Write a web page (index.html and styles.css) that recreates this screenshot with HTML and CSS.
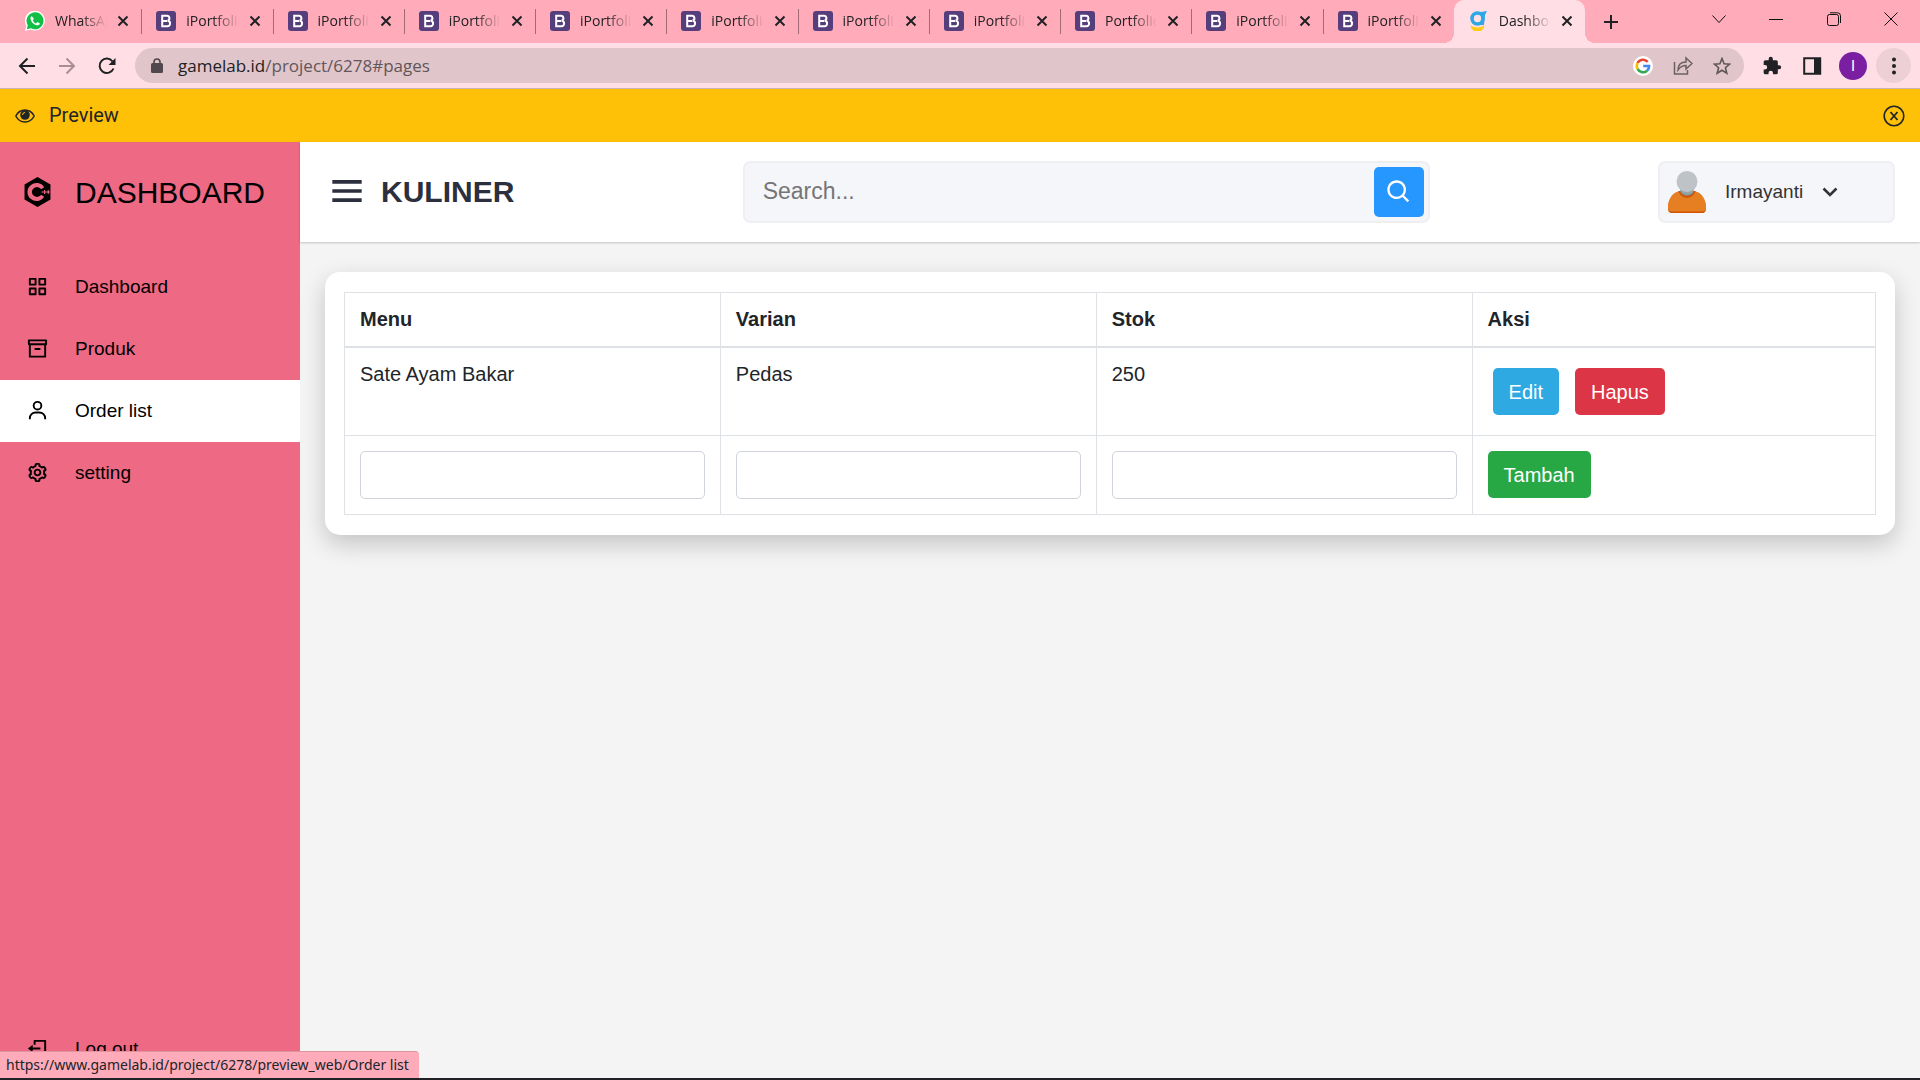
FILE: index.html
```html
<!DOCTYPE html>
<html lang="id">
<head>
<meta charset="utf-8">
<title>Dashboard</title>
<link rel="stylesheet" href="styles.css">
</head>
<body>
<svg class="sprite" aria-hidden="true">
  <symbol id="bs" viewBox="0 0 20 20"><rect width="20" height="20" rx="3" fill="#563d7c"/><path d="M6.200 4.800h4.600a2.500 2.500 0 0 1 .8 4.900a2.750 2.750 0 0 1-.6 5.500H6.200z M7 9.900h4" fill="none" stroke="#fff" stroke-width="2"/></symbol>
  <symbol id="x" viewBox="0 0 12 12"><path d="M1.500 1.500l9 9M10.500 1.500l-9 9" stroke="#202124" stroke-width="2" fill="none"/></symbol>
</svg>

<div class="browser">
  <div class="strip">
    <div class="tabs">
      <div class="tab"><svg class="fav" viewBox="0 0 20 20"><path d="M0 20l1.300-5.200A10 10 0 1 1 5.500 18.600z" fill="#fff"/><path d="M1.700 18.300l1.100-4A8.500 8.500 0 1 1 6 17.300z" fill="#12bf45"/><path d="M7 5.200c-.9 0-1.600 1-1.500 2.200.3 3.500 4 6.900 7.300 6.900 1.200 0 2-.9 2-2l-2.500-1.300-1.200 1.400c-1.600-.6-2.700-1.800-3.300-3.200L8.900 8z" fill="#fff"/></svg><span class="tab-title">WhatsApp</span><button class="close" aria-label="Close"><svg><use href="#x"/></svg></button></div>
      <div class="tab"><svg class="fav"><use href="#bs"/></svg><span class="tab-title">iPortfolio</span><button class="close" aria-label="Close"><svg><use href="#x"/></svg></button></div>
      <div class="tab"><svg class="fav"><use href="#bs"/></svg><span class="tab-title">iPortfolio</span><button class="close" aria-label="Close"><svg><use href="#x"/></svg></button></div>
      <div class="tab"><svg class="fav"><use href="#bs"/></svg><span class="tab-title">iPortfolio</span><button class="close" aria-label="Close"><svg><use href="#x"/></svg></button></div>
      <div class="tab"><svg class="fav"><use href="#bs"/></svg><span class="tab-title">iPortfolio</span><button class="close" aria-label="Close"><svg><use href="#x"/></svg></button></div>
      <div class="tab"><svg class="fav"><use href="#bs"/></svg><span class="tab-title">iPortfolio</span><button class="close" aria-label="Close"><svg><use href="#x"/></svg></button></div>
      <div class="tab"><svg class="fav"><use href="#bs"/></svg><span class="tab-title">iPortfolio</span><button class="close" aria-label="Close"><svg><use href="#x"/></svg></button></div>
      <div class="tab"><svg class="fav"><use href="#bs"/></svg><span class="tab-title">iPortfolio</span><button class="close" aria-label="Close"><svg><use href="#x"/></svg></button></div>
      <div class="tab"><svg class="fav"><use href="#bs"/></svg><span class="tab-title">Portfolio</span><button class="close" aria-label="Close"><svg><use href="#x"/></svg></button></div>
      <div class="tab"><svg class="fav"><use href="#bs"/></svg><span class="tab-title">iPortfolio</span><button class="close" aria-label="Close"><svg><use href="#x"/></svg></button></div>
      <div class="tab"><svg class="fav"><use href="#bs"/></svg><span class="tab-title">iPortfolio</span><button class="close" aria-label="Close"><svg><use href="#x"/></svg></button></div>
      <div class="tab active"><svg class="fav" viewBox="0 0 20 20"><circle cx="8.500" cy="7.500" r="5.500" fill="none" stroke="#2ea8e5" stroke-width="3.600"/><path d="M12 1l6-1-2 4-1 10h-3z" fill="#2ea8e5"/><path d="M1.500 14.500q7 4 14 0l-1 3-2.500 2.500H5l-2.500-2.500z" fill="#fccb16"/></svg><span class="tab-title">Dashboard</span><button class="close" aria-label="Close"><svg><use href="#x"/></svg></button></div>
    </div>
    <div class="strip-end">
      <button class="newtab" aria-label="New tab"><svg width="16" height="16" viewBox="0 0 16 16"><path d="M8 1v14M1 8h14" stroke="#202124" stroke-width="2"/></svg></button>
      <button class="caption" aria-label="Search tabs"><svg width="14" height="14" viewBox="0 0 14 14"><path d="M.5 3.500l6.500 7 6.500-7"/></svg></button>
      <button class="caption" aria-label="Minimize"><svg width="14" height="14" viewBox="0 0 14 14"><path d="M0 7.500h14"/></svg></button>
      <button class="caption" aria-label="Restore"><svg width="14" height="14" viewBox="0 0 14 14"><rect x=".5" y="2.500" width="11" height="11" rx="2"/><path d="M3 .8h7.500a3 3 0 0 1 3 3V11"/></svg></button>
      <button class="caption" aria-label="Close window"><svg width="14" height="14" viewBox="0 0 14 14"><path d="M.5.5l13 13M13.500.5l-13 13"/></svg></button>
    </div>
  </div>

  <div class="toolbar">
    <button class="tool" aria-label="Back"><svg width="18" height="18" viewBox="0 0 18 18"><path d="M17 9H2M9.500 1.500L2 9l7.500 7.500" fill="none" stroke="#202124" stroke-width="2"/></svg></button>
    <button class="tool" aria-label="Forward"><svg width="18" height="18" viewBox="0 0 18 18"><path d="M1 9h15M8.500 1.500L16 9l-7.500 7.500" fill="none" stroke="#a98f95" stroke-width="2"/></svg></button>
    <button class="tool" aria-label="Reload"><svg width="18" height="18" viewBox="0 0 18 18"><path d="M15.500 11.500A7.200 7.200 0 1 1 14.600 4.500" fill="none" stroke="#202124" stroke-width="2"/><path d="M17.500 1v7h-7z" fill="#202124"/></svg></button>
    <div class="omnibox">
      <svg width="12" height="16" viewBox="0 0 12 16"><rect y="5" width="12" height="10" rx="1.500" fill="#50484c"/><path d="M3 6V4a3 3 0 0 1 6 0v2" fill="none" stroke="#50484c" stroke-width="1.600"/></svg>
      <span class="url">gamelab.id<span class="path">/project/6278#pages</span></span>
      <div class="omni-icons">
        <svg width="20" height="20" viewBox="0 0 20 20"><circle cx="10" cy="10" r="10" fill="#fff"/><g fill="none" stroke-width="2.600"><path d="M14.700 5.800A6.200 6.200 0 0 0 4.600 7" stroke="#ea4335"/><path d="M4.600 7a6.200 6.200 0 0 0 0 6" stroke="#fbbc05"/><path d="M4.600 13a6.200 6.200 0 0 0 9.500 1.700" stroke="#34a853"/><path d="M14.100 14.700A6 6 0 0 0 16.100 10H10.200" stroke="#4285f4"/></g></svg>
        <svg width="20" height="20" viewBox="0 0 20 20"><path d="M1.500 6v12h13v-4M5 14c0-5 3-8 8-8V2l6 5.500-6 5.500V9.500c-4 0-6 1.500-8 4.500z" fill="none" stroke="#6b6064" stroke-width="1.500"/></svg>
        <svg width="18" height="18" viewBox="0 0 18 18"><path d="M9 1.500l2.100 5.200 5.600.4-4.300 3.600 1.400 5.500L9 13.200l-4.800 3 1.400-5.500-4.300-3.600 5.600-.4z" fill="none" stroke="#5f5659" stroke-width="1.600"/></svg>
      </div>
    </div>
    <div class="actions">
      <svg width="20" height="20" viewBox="0 0 24 24"><path d="M20.500 11H19V7a2 2 0 0 0-2-2h-4V3.500a2.500 2.500 0 0 0-5 0V5H4a2 2 0 0 0-2 2v3.800h1.500a2.700 2.700 0 0 1 0 5.400H2V20a2 2 0 0 0 2 2h3.800v-1.500a2.700 2.700 0 0 1 5.400 0V22H17a2 2 0 0 0 2-2v-4h1.500a2.500 2.500 0 0 0 0-5z" fill="#202124"/></svg>
      <svg width="20" height="20" viewBox="0 0 20 20"><path d="M2.200 2.200h16v15.600h-16z" fill="none" stroke="#202124" stroke-width="2"/><path d="M12 2h6v16h-6z" fill="#202124"/></svg>
      <span class="account">I</span>
      <button class="more" aria-label="Menu"><svg width="4" height="18" viewBox="0 0 4 18"><g fill="#202124"><circle cx="2" cy="2.500" r="2"/><circle cx="2" cy="9" r="2"/><circle cx="2" cy="15.500" r="2"/></g></svg></button>
    </div>
  </div>
</div>

<div class="preview">
  <svg width="20" height="14" viewBox="0 0 20 14"><path d="M.8 7C5-1 15-1 19.200 7 15 15 5 15 .8 7z" fill="none" stroke="#212529" stroke-width="1.500"/><circle cx="10" cy="6" r="4.800" fill="#212529"/><path d="M7.500 6A2.500 2.500 0 0 1 10 3.500" fill="none" stroke="#ffc107"/></svg>
  <span>Preview</span>
  <button class="preview-close" aria-label="Close preview"><svg width="22" height="22" viewBox="0 0 22 22"><circle cx="11" cy="11" r="9.800" fill="none" stroke="#212529" stroke-width="1.600"/><path d="M7.500 7l7 8M14.500 7l-7 8" stroke="#212529" stroke-width="1.800"/></svg></button>
</div>

<div class="app">
  <nav class="sidebar">
    <a class="brand" href="#"><svg class="brand-icon" width="38" height="38" viewBox="0 0 24 24"><path fill-rule="evenodd" d="M12 2.500l8.200 4.700v9.600L12 21.500l-8.200-4.700V7.200z M16.200 9A5.700 5.700 0 1 0 16.200 15L14 13.600A3 3 0 1 1 14 10.400z"/><circle cx="12" cy="12" r="2.800"/><path d="M14.500 12h5.500M16.500 10.700v2.600M18.800 10.700v2.600" stroke="#ee6983" stroke-width=".7"/></svg><span>DASHBOARD</span></a>
    <a class="item" href="#"><svg viewBox="0 0 24 24"><path d="M4 4h6v6H4zM14 4h6v6h-6zM4 14h6v6H4zM14 14h6v6h-6z" fill="none" stroke="#000" stroke-width="2" stroke-linejoin="round"/></svg><span>Dashboard</span></a>
    <a class="item" href="#"><svg viewBox="0 0 24 24"><path d="M3 3.500h18v4H3zM4 8v12.500h16V8M9 12.500h6" fill="none" stroke="#000" stroke-width="2" stroke-linejoin="round"/></svg><span>Produk</span></a>
    <a class="item current" href="#"><svg viewBox="0 0 24 24"><path d="M12 2a5 5 0 1 0 5 5 5 5 0 0 0-5-5zm0 8a3 3 0 1 1 3-3 3 3 0 0 1-3 3zm9 11v-1a7 7 0 0 0-7-7h-4a7 7 0 0 0-7 7v1h2v-1a5 5 0 0 1 5-5h4a5 5 0 0 1 5 5v1z"/></svg><span>Order list</span></a>
    <a class="item" href="#"><svg viewBox="0 0 24 24"><path d="M12 16c2.206 0 4-1.794 4-4s-1.794-4-4-4-4 1.794-4 4 1.794 4 4 4zm0-6c1.084 0 2 .916 2 2s-.916 2-2 2-2-.916-2-2 .916-2 2-2z"/><path d="m2.845 16.136 1 1.730c.531.917 1.809 1.261 2.730.730l.529-.306A8.100 8.100 0 0 0 9 19.402V20c0 1.103.897 2 2 2h2c1.103 0 2-.897 2-2v-.598a8.132 8.132 0 0 0 1.896-1.111l.529.306c.923.530 2.198.188 2.731-.731l.999-1.729a2.001 2.001 0 0 0-.731-2.732l-.505-.292a7.718 7.718 0 0 0 0-2.224l.505-.292a2.002 2.002 0 0 0 .731-2.732l-.999-1.729c-.531-.920-1.808-1.265-2.731-.732l-.529.306A8.100 8.100 0 0 0 15 4.598V4c0-1.103-.897-2-2-2h-2c-1.103 0-2 .897-2 2v.598a8.132 8.132 0 0 0-1.896 1.111l-.529-.306c-.924-.531-2.200-.187-2.731.732l-.999 1.729a2.001 2.001 0 0 0 .731 2.732l.505.292a7.683 7.683 0 0 0 0 2.223l-.505.292a2.003 2.003 0 0 0-.731 2.733zm3.326-2.758A5.703 5.703 0 0 1 6 12c0-.462.058-.926.170-1.378a.999.999 0 0 0-.470-1.108l-1.123-.650.998-1.729 1.145.662a.997.997 0 0 0 1.188-.142 6.071 6.071 0 0 1 2.384-1.399A1 1 0 0 0 11 5.300V4h2v1.300a1 1 0 0 0 .708.956 6.083 6.083 0 0 1 2.384 1.399.999.999 0 0 0 1.188.142l1.144-.661 1 1.729-1.124.649a1 1 0 0 0-.470 1.108c.112.452.170.916.170 1.378 0 .461-.058.925-.171 1.378a1 1 0 0 0 .471 1.108l1.123.649-.998 1.729-1.145-.661a.996.996 0 0 0-1.188.142 6.071 6.071 0 0 1-2.384 1.399A1 1 0 0 0 13 18.700l.002 1.300H11v-1.300a1 1 0 0 0-.708-.956 6.083 6.083 0 0 1-2.384-1.399.992.992 0 0 0-1.188-.141l-1.144.662-1-1.729 1.124-.651a1 1 0 0 0 .471-1.108z"/></svg><span>setting</span></a>
    <a class="item logout" href="#"><svg viewBox="0 0 24 24"><path d="M9 8V4h11v16H9v-4M5 12h10" fill="none" stroke="#000" stroke-width="2" stroke-linejoin="round"/><path d="M2 12l5-4v8z"/></svg><span>Log out</span></a>
  </nav>

  <div class="content">
    <header class="header">
      <div class="title"><button class="burger" aria-label="Toggle menu"><svg width="44" height="44" viewBox="0 0 24 24"><path d="M4 6h16v2H4zm0 5h16v2H4zm0 5h16v2H4z" fill="#2b2f3e"/></svg></button><h1>KULINER</h1></div>
      <form class="search"><input type="text" placeholder="Search..." aria-label="Search"><button type="button" aria-label="Search"><svg width="28" height="28" viewBox="0 0 24 24"><path d="M10 18a7.952 7.952 0 0 0 4.897-1.688l4.396 4.396 1.414-1.414-4.396-4.396A7.952 7.952 0 0 0 18 10c0-4.411-3.589-8-8-8s-8 3.589-8 8 3.589 8 8 8zm0-14c3.309 0 6 2.691 6 6s-2.691 6-6 6-6-2.691-6-6 2.691-6 6-6z" fill="#fff"/></svg></button></form>
      <button class="profile">
        <svg width="38" height="42" viewBox="0 0 38 42"><path d="M0 37C0 28 6 20 14 20h10c8 0 14 8 14 17 0 3-1 5-4 5H4c-3 0-4-2-4-5z" fill="#d35400"/><path d="M0 36C0 28 5 21 11 20.500c3 6.500 13 6.500 16 0C33 21 38 28 38 36c0 3-1 4.500-4 4.500H4C1 40.500 0 39 0 36z" fill="#e67e22"/><path d="M10.500 20h17c-2 9-15 9-17 0z" fill="#d35400"/><path d="M12 19.500h14c-1 7-13 7-14 0z" fill="#7f8c8d"/><path d="M12 18h14c-1 7.500-13 7.500-14 0z" fill="#95a5a6"/><circle cx="19" cy="10.500" r="10.500" fill="#bdc3c7"/></svg>
        <span>Irmayanti</span>
        <svg width="24" height="24" viewBox="0 0 24 24"><path d="M5.500 8.500l6.500 6.500L18.500 8.500" fill="none" stroke="#333" stroke-width="2.600"/></svg>
      </button>
    </header>

    <main class="main">
      <section class="card">
        <table>
          <colgroup><col class="field"><col class="field"><col class="field"><col></colgroup>
          <thead><tr><th>Menu</th><th>Varian</th><th>Stok</th><th>Aksi</th></tr></thead>
          <tbody>
            <tr><td>Sate Ayam Bakar</td><td>Pedas</td><td>250</td><td><div class="row-actions"><button class="btn edit">Edit</button><button class="btn delete">Hapus</button></div></td></tr>
            <tr><td><input type="text" aria-label="Menu"></td><td><input type="text" aria-label="Varian"></td><td><input type="text" aria-label="Stok"></td><td><button class="btn add">Tambah</button></td></tr>
          </tbody>
        </table>
      </section>
    </main>
  </div>
</div>

<div class="status"><span>https://www.gamelab.id/project/6278/preview_web/Order list</span></div>
</body>
</html>
```
FILE: styles.css
```css
* { box-sizing: border-box; margin: 0; padding: 0; }
body {
  position: relative;
  display: flex;
  flex-direction: column;
  min-height: 100vh;
  font: 20px/23px "Liberation Sans", Arial, sans-serif;
  color: #212529;
}
button { border: 0; background: none; font: inherit; color: inherit; }
a { color: #000; text-decoration: none; }
svg { display: block; flex: none; }
.sprite { position: absolute; width: 0; height: 0; }

/* Browser frame */
.browser { font-family: "Open Sans", "Noto Sans", sans-serif; color: #202124; }
.strip { display: flex; height: 43px; background: #ffabb9; }
.tabs { display: flex; flex: 1; min-width: 0; padding-left: 10px; }
.tab {
  position: relative;
  display: flex;
  flex: 1;
  align-items: center;
  min-width: 0;
  padding: 0 12px 2px 15px;
  font-size: 14px;
}
.tab + .tab:not(.active)::before {
  content: "";
  position: absolute;
  left: 0;
  top: 9px;
  width: 1px;
  height: 25px;
  background: #a06b75;
}
.tab.active { background: #ffdfe5; border-radius: 10px 10px 0 0; }
.tab.active::before, .tab.active::after {
  content: "";
  position: absolute;
  bottom: 0;
  width: 10px;
  height: 10px;
}
.tab.active::before { left: -10px; background: radial-gradient(circle at 0 0, transparent 10px, #ffdfe5 10px); }
.tab.active::after { right: -10px; background: radial-gradient(circle at 100% 0, transparent 10px, #ffdfe5 10px); }
.fav { width: 20px; height: 20px; }
.tab-title {
  flex: 1;
  margin-left: 10px;
  overflow: hidden;
  white-space: nowrap;
  -webkit-mask-image: linear-gradient(90deg, #000 50%, transparent);
  mask-image: linear-gradient(90deg, #000 50%, transparent);
}
.close { margin-left: 10px; }
.close svg { width: 12px; height: 12px; }
.strip-end { display: flex; flex: none; width: 335px; padding-left: 11px; }
.newtab { display: grid; place-items: center; width: 30px; margin-right: 64px; }
.caption { display: grid; place-items: center; flex: 1; padding-bottom: 6px; }
.caption svg { fill: none; stroke: #111; stroke-width: 1px; }
.toolbar {
  display: flex;
  align-items: center;
  height: 46px;
  padding: 0 9px 0 7px;
  background: #ffdfe5;
  border-bottom: 1px solid #cbb4b9;
}
.tool { display: grid; place-items: center; width: 40px; height: 40px; }
.omnibox {
  display: flex;
  flex: 1;
  align-items: center;
  height: 35px;
  margin-left: 8px;
  padding: 0 13px 0 16px;
  border-radius: 18px;
  background: #e0c5ca;
}
.url { flex: 1; margin-left: 15px; font-size: 17px; }
.path { color: #62565a; }
.omni-icons { display: flex; align-items: center; gap: 20px; }
.actions { display: flex; align-items: center; gap: 20px; margin-left: 18px; }
.account {
  display: grid;
  place-items: center;
  width: 28px;
  height: 28px;
  margin-left: -3px;
  border-radius: 50%;
  background: #7b1fa2;
  color: #fff;
  font: 15px/28px Roboto, sans-serif;
}
.more { display: grid; place-items: center; width: 35px; height: 35px; margin-left: -11px; border-radius: 50%; background: #edd0d6; }

/* Preview bar */
.preview {
  display: flex;
  align-items: center;
  gap: 14px;
  height: 53px;
  padding: 0 15px;
  background: #ffc107;
  font-family: Roboto, sans-serif;
}
.preview-close { margin-left: auto; }

/* Dashboard */
.app { display: flex; flex: 1; }
.sidebar { display: flex; flex-direction: column; width: 300px; background: #ee6983; }
.brand { display: flex; align-items: center; height: 100px; margin-bottom: 14px; font-size: 30px; }
.brand-icon { width: 75px; }
.item { display: flex; align-items: center; height: 62px; padding-bottom: 2px; font-size: 19px; }
.item svg { width: 75px; height: 23px; }
.item.current { background: #fff; }
.logout { margin-top: auto; }
.content { flex: 1; min-width: 0; background: #f4f4f4; }
.header {
  display: flex;
  align-items: center;
  justify-content: space-between;
  height: 100px;
  padding: 0 25px;
  background: #fff;
  box-shadow: 0 1px 2px rgba(0, 0, 0, .2);
}
.title { display: flex; align-items: center; gap: 12px; }
.burger { padding-bottom: 2px; }
h1 { font-size: 30px; line-height: 36px; color: #2b2f3e; }
.search, .profile {
  display: flex;
  align-items: center;
  height: 62px;
  border: 2px solid #efeef1;
  border-radius: 7px;
  background: #f5f6fa;
}
.search { flex: 0 1 687px; padding-right: 4px; }
.search input {
  flex: 1;
  min-width: 0;
  height: 58px;
  padding: 0 18px 2px;
  border: 0;
  background: none;
  font: 23px "Liberation Sans", Arial, sans-serif;
}
.search input::placeholder { color: #757575; }
.search button { display: grid; place-items: center; width: 50px; height: 50px; border-radius: 5px; background: #2697ff; }
.profile { width: 237px; padding: 0 8px; font-size: 19px; color: #333; }
.profile span { margin: 0 15px 0 19px; padding-bottom: 2px; }
.main { padding: 30px 25px; }
.card { padding: 20px 19px; border-radius: 15px; background: #fff; box-shadow: 0 9px 25px rgba(0, 0, 0, .2); }
table { width: 100%; border-collapse: collapse; table-layout: fixed; }
.field { width: 24.55%; }
th, td { padding: 15px; border: 1px solid #dee2e6; text-align: left; vertical-align: top; }
thead th { border-bottom-width: 2px; }
td input { display: block; width: 100%; height: 48px; padding: 0 15px; border: 1px solid #ced4da; border-radius: 5px; font: inherit; }
.row-actions { display: flex; gap: 16px; padding: 5px; }
.btn { display: block; height: 47px; padding: 1px 16px 0; border-radius: 5px; color: #fff; }
.edit { background: #2ea9e2; }
.delete { background: #dc3545; }
.add { background: #28a745; }

/* Link status bubble over the page's bottom edge */
.status { position: absolute; left: 0; right: 0; bottom: 0; border-bottom: 2px solid #222226; }
.status span {
  display: inline-block;
  height: 27px;
  padding: 0 10px 0 6px;
  border-top: 1px solid #dd94a1;
  border-radius: 0 4px 0 0;
  background: #ffabb9;
  font: 14px/26px "Noto Sans", "Open Sans", sans-serif;
  vertical-align: top;
}
```
